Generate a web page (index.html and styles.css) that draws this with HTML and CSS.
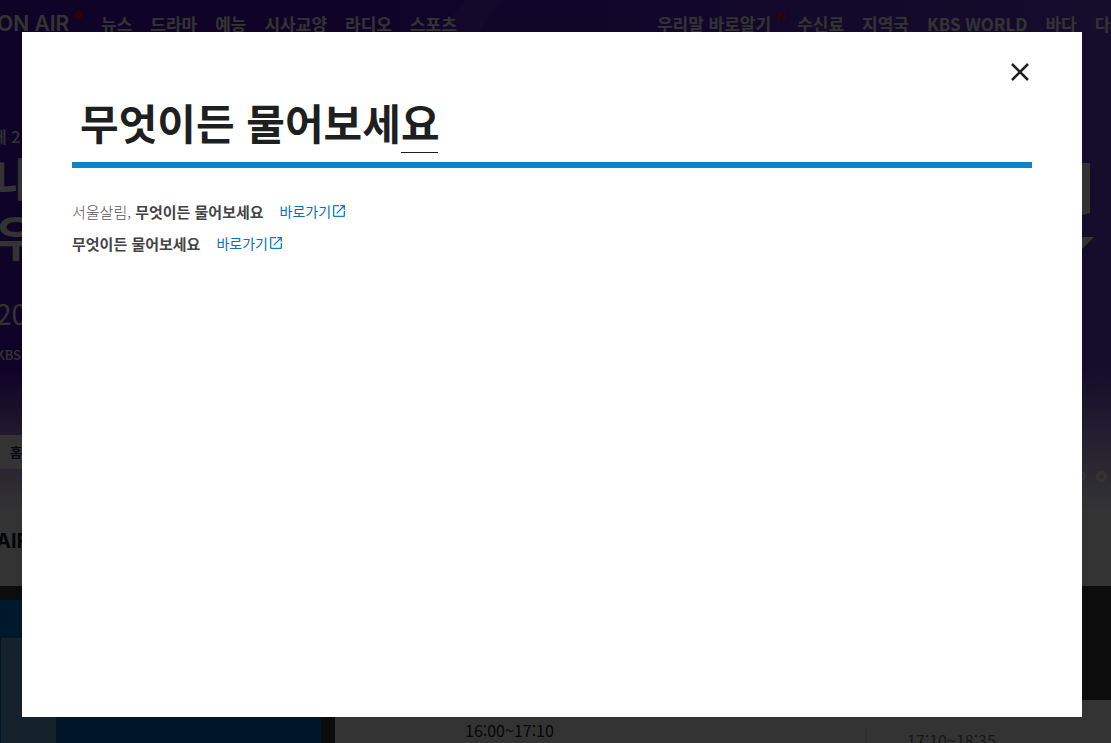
FILE: index.html
```html
<!DOCTYPE html>
<html lang="ko">
<head>
  <meta charset="UTF-8" />
  <meta name="viewport" content="width=device-width, initial-scale=1.0"/>
  <title>KBS 검색</title>
  <link rel="stylesheet" href="styles.css">
</head>
<body>

  <!-- Page behind the search layer -->
  <div class="page">
    <div class="top">
      <header class="header">
        <a class="onair" href="#">ON AIR<span class="live-dot"></span></a>
        <nav class="menu">
          <a href="#">뉴스</a>
          <a href="#">드라마</a>
          <a href="#">예능</a>
          <a href="#">시사교양</a>
          <a href="#">라디오</a>
          <a href="#">스포츠</a>
        </nav>
        <nav class="menu menu-sub">
          <a class="has-new" href="#">우리말 바로알기<span class="new">N</span></a>
          <a href="#">수신료</a>
          <a href="#">지역국</a>
          <a href="#">KBS WORLD</a>
          <a href="#">바다</a>
          <a href="#">다시</a>
        </nav>
      </header>

      <section class="hero">
        <div class="hero-text">
          <p class="hero-label">제 2</p>
          <p class="hero-title">내<br>우</p>
          <p class="hero-date">20</p>
          <p class="hero-channel">KBS</p>
        </div>
        <svg class="hero-mark" width="12" height="90" viewBox="0 0 12 90">
          <path d="M0 0H8V50L0 52Z M0 74H12L0 86Z" fill="#fff"/>
        </svg>
      </section>

      <div class="quick">
        <a class="home" href="#">홈</a>
        <div class="dots">
          <span class="dot"></span>
          <span class="dot"></span>
        </div>
      </div>

      <h2 class="onair-title">AIR</h2>
    </div>

    <section class="schedule">
      <div class="channel">
        <div class="channel-head"></div>
        <div class="channel-body"><div class="channel-thumb"></div></div>
      </div>
      <div class="times">
        <div class="time">16:00~17:10</div>
        <div class="time next">17:10~18:35</div>
      </div>
    </section>
  </div>

  <!-- Search layer -->
  <div class="overlay">
    <div class="modal" role="dialog" aria-label="검색">
      <button class="close-btn" type="button" aria-label="닫기">
        <svg width="24" height="24" viewBox="0 0 24 24">
          <path d="M4 4L20 20M20 4L4 20" stroke="#1d1f20" stroke-width="2.5"/>
        </svg>
      </button>

      <div class="search-box">
        <input class="search-input" type="text" aria-label="검색어" value="무엇이든 물어보세요" spellcheck="false">
        <span class="compose-line"></span>
      </div>

      <ul class="results">
        <li>
          <span class="name">서울살림, <b>무엇이든 물어보세요</b></span>
          <a class="go" href="#">바로가기<svg width="16" height="16" viewBox="0 0 24 24"><path d="M19 19H5V5h7V3H5a2 2 0 0 0-2 2v14a2 2 0 0 0 2 2h14c1.100 0 2-.9 2-2v-7h-2v7zM14 3v2h3.590l-9.830 9.830 1.410 1.410L19 6.410V10h2V3h-7z" fill="#0b84cc"/></svg></a>
        </li>
        <li>
          <span class="name"><b>무엇이든 물어보세요</b></span>
          <a class="go" href="#">바로가기<svg width="16" height="16" viewBox="0 0 24 24"><path d="M19 19H5V5h7V3H5a2 2 0 0 0-2 2v14a2 2 0 0 0 2 2h14c1.100 0 2-.9 2-2v-7h-2v7zM14 3v2h3.590l-9.830 9.830 1.410 1.410L19 6.410V10h2V3h-7z" fill="#0b84cc"/></svg></a>
        </li>
      </ul>
    </div>
  </div>

</body>
</html>
```

FILE: styles.css
```css
* {
  margin: 0; padding: 0;
  box-sizing: border-box;
}

body, html {
  height: 100%;
  overflow: hidden;
  font-family: 'Noto Sans CJK KR', sans-serif;
  background: #fff;
  color: #222;
}

a {
  color: inherit;
  text-decoration: none;
}

.page {
  height: 100%;
  overflow: hidden;
  display: flex;
  flex-direction: column;
}

.top {
  position: relative;
  height: 586px;
  flex: none;
  background:
    linear-gradient(to bottom, transparent 370px, #fff 510px),
    linear-gradient(125deg, transparent 380px, rgba(255, 255, 255, 0.08) 381px, rgba(255, 255, 255, 0.08) 410px, transparent 411px),
    linear-gradient(to right, #500fc8 30%, #6941dc);
}

.header {
  display: flex;
  height: 46px;
  align-items: center;
  white-space: nowrap;
  color: #fff;
  font-size: 17px;
  font-weight: bold;
}

.onair {
  display: flex;
  flex: none;
  width: 104px;
  margin-left: -3px;
  gap: 5px;
  font-family: Inter, sans-serif;
  font-size: 21px;
  font-weight: 600;
}

.live-dot {
  flex: none;
  width: 8px;
  height: 8px;
  border-radius: 50%;
  background: #f00020;
}

.menu {
  display: flex;
  flex: none;
  gap: 18px;
}

.menu-sub {
  margin-left: 200px;
}

.has-new {
  position: relative;
  margin-right: 8px;
}

.new {
  position: absolute;
  top: -1px;
  right: -14px;
  font-size: 12px;
  line-height: 12px;
  font-weight: 900;
  color: #f00020;
}

.hero {
  display: flex;
  justify-content: space-between;
  height: 389px;
  padding: 78px 17px 0 0;
  color: #fff;
}

.hero-text {
  margin-left: -8px;
  white-space: nowrap;
}

.hero-label {
  font-size: 16px;
  line-height: 24px;
  font-weight: 500;
}

.hero-title {
  margin-left: 2px;
  font-size: 48px;
  line-height: 58px;
  font-weight: bold;
}

.hero-date {
  margin: 29px 0 12px 4px;
  font-size: 28px;
  line-height: 40px;
}

.hero-channel {
  margin-left: 4px;
  font-size: 13px;
  line-height: 20px;
  font-weight: 500;
}

.hero-mark {
  margin-top: 39px;
}

.quick {
  display: flex;
  justify-content: space-between;
}

.home {
  width: 120px;
  padding-left: 10px;
  background: #fff;
  font-size: 13px;
  line-height: 34px;
  font-weight: bold;
  color: #2a2a60;
}

.dots {
  display: flex;
  align-items: flex-end;
  gap: 10px;
  margin-right: 4px;
  margin-bottom: -13px;
}

.dot {
  width: 11px;
  height: 11px;
  border: 3px solid #fff;
  border-radius: 50%;
}

.onair-title {
  margin: 58px 0 0 -4px;
  font-family: Inter, sans-serif;
  font-size: 20px;
  line-height: 28px;
}

.schedule {
  display: flex;
  flex: 1;
  padding-top: 14px;
  background: #3c3c3c;
}

.channel {
  display: flex;
  flex-direction: column;
  width: 321px;
  margin-right: 14px;
  background: #0069c8;
}

.channel-head {
  height: 38px;
  background: #0078d7;
}

.channel-body {
  flex: 1;
  display: flex;
  padding-left: 1px;
}

.channel-thumb {
  width: 55px;
  background: #6eaad7;
}

.times {
  flex: 1;
  display: grid;
  grid-template-columns: 531px 1fr;
  margin-top: 100px;
  background: #fff;
  font-size: 16px;
  line-height: 24px;
}

.time {
  padding: 18px 0 0 130px;
}

.next {
  margin-top: 27px;
  padding: 1px 0 0 40px;
  border-left: 1px solid #e0e0e0;
  color: #777;
}

.overlay {
  position: fixed;
  inset: 0;
  display: flex;
  padding: 32px 29px 26px 22px;
  background: rgba(0, 0, 0, 0.8);
}

.modal {
  flex: 1;
  display: flex;
  flex-direction: column;
  padding: 28px 50px;
  background: #fff;
}

.close-btn {
  align-self: flex-end;
  width: 24px;
  height: 24px;
  border: none;
  background: none;
  cursor: pointer;
}

.search-box {
  position: relative;
}

.search-input {
  display: block;
  width: 100%;
  height: 84px;
  padding: 2px 8px 6px;
  border: none;
  border-bottom: 6px solid #0b84cc;
  outline: none;
  font-family: inherit;
  font-size: 42px;
  font-weight: bold;
  color: #1d1f20;
}

/* underline of the syllable being composed */
.compose-line {
  position: absolute;
  left: 329px;
  bottom: 15px;
  width: 37px;
  height: 1px;
  background: #1d1f20;
}

.results {
  margin-top: 28px;
  list-style: none;
}

.results li {
  display: flex;
  align-items: flex-start;
  gap: 16px;
  font-size: 15px;
  line-height: 32px;
}

.name {
  font-weight: 300;
  color: #555;
}

.name b {
  font-weight: bold;
  color: #444;
}

.go {
  display: flex;
  align-items: center;
  font-size: 14px;
  line-height: 30px;
  color: #0b70b8;
}
```
